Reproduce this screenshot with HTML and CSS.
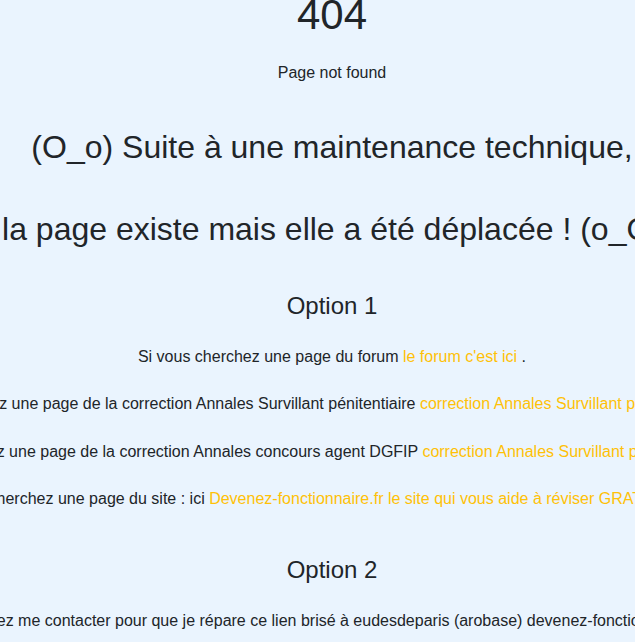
FILE: index.html
```html
<!DOCTYPE html>
<html lang="fr">
<head>
  <meta charset="UTF-8">
  <meta name="viewport" content="width=device-width, initial-scale=1.0">
  <title>404 - Page not found</title>
  <link rel="stylesheet" href="styles.css">
</head>
<body>
  <div class="page">
    <h1 class="code">404</h1>
    <p class="subtitle">Page not found</p>

    <h1 class="notice">
      <span>(O_o) Suite à une maintenance technique,</span>
      <span>la page existe mais elle a été déplacée ! (o_O)</span>
    </h1>

    <div class="option">
      <h2>Option 1</h2>
      <p>Si vous cherchez une page du forum <a href="#">le forum c'est ici</a> .</p>
      <p>Si vous cherchez une page de la correction Annales Survillant pénitentiaire <a href="#">correction Annales Survillant pénitentiaire c'est ici</a> .</p>
      <p>Si vous cherchez une page de la correction Annales concours agent DGFIP <a href="#">correction Annales Survillant pénitentiaire c'est ici</a> .</p>
      <p>Si vous cherchez une page du site : ici <a href="#">Devenez-fonctionnaire.fr le site qui vous aide à réviser GRATUITEMENT</a> .</p>
    </div>

    <div class="option">
      <h2>Option 2</h2>
      <p>Vous pouvez me contacter pour que je répare ce lien brisé à eudesdeparis (arobase) devenez-fonctionnaire.fr merci</p>
    </div>
  </div>
</body>
</html>
```

FILE: styles.css
```css
body {
  margin: 0;
  padding: 0;
  background-color: #eaf4fe;
  color: #212529;
  font-family: "Liberation Sans", Arial, sans-serif;
}

.page {
  width: 664px;
  display: flex;
  flex-direction: column;
  align-items: center;
  text-align: center;
}

.code {
  margin: 0;
  font-size: 42px;
  font-weight: normal;
  line-height: 30px;
}

.subtitle {
  margin: 31px 0 0;
  font-size: 16px;
  line-height: 24px;
}

.notice {
  display: flex;
  flex-direction: column;
  align-items: center;
  gap: 42px;
  margin: 42px 0 0;
  font-size: 32px;
  font-weight: normal;
  line-height: 40px;
}

.notice span {
  white-space: nowrap;
}

.option {
  display: flex;
  flex-direction: column;
  align-items: center;
  margin-top: 42px;
}

.option + .option {
  margin-top: 44px;
}

.option h2 {
  margin: 0;
  font-size: 24px;
  font-weight: normal;
  line-height: 30px;
}

.option p {
  margin: 23.5px 0 0;
  font-size: 16px;
  line-height: 24px;
  white-space: nowrap;
}

.option a {
  color: #ffc107;
  text-decoration: none;
}
```
